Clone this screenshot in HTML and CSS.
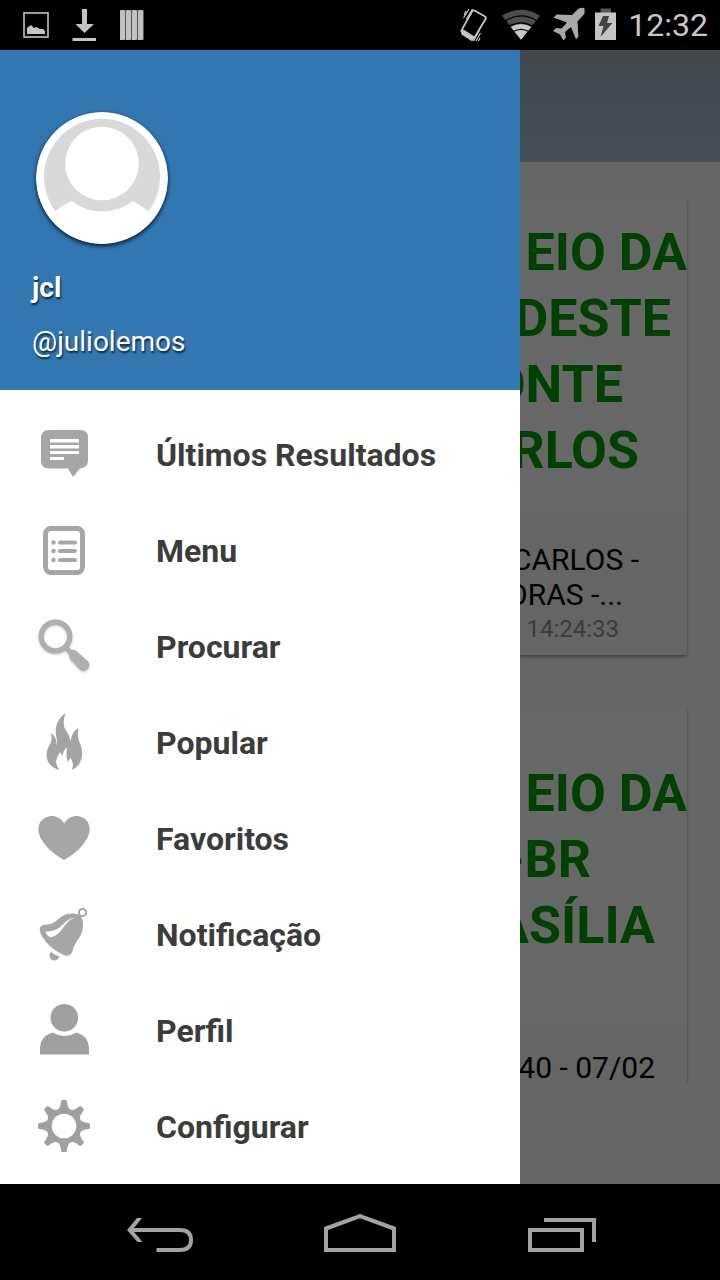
FILE: index.html
```html
<!DOCTYPE html>
<html lang="pt-BR">
<head>
<meta charset="utf-8">
<meta name="viewport" content="width=device-width, initial-scale=1">
<title>Últimos Resultados</title>
<link rel="stylesheet" href="styles.css">
</head>
<body>
<div class="screen">
  <header class="status-bar">
    <div class="status-group">
      <svg class="status-icon status-icon-wide" viewBox="12 0 48 50" aria-hidden="true">
        <rect x="24" y="13" width="24" height="24" fill="none" stroke="#c4c4c4" stroke-width="1.6"/>
        <path d="M27 34v-6l4-3 3 3 2-1 4 2 3 0 2 2v3z" fill="#c4c4c4"/>
      </svg>
      <svg class="status-icon status-icon-wide" viewBox="60 0 48 50" aria-hidden="true">
        <path d="M82 9h5v15h7l-9.500 9-9-9H82zM72.500 38H96v3H72.500z" fill="#c4c4c4"/>
      </svg>
      <svg class="status-icon status-icon-wide" viewBox="108 0 48 50" aria-hidden="true">
        <path d="M120 10h24v30h-24z" fill="#555"/>
        <path d="M120 11l1-1h3l1 1v28l-1 1h-4zM126 11l1-1h3l1 1v28l-1 1h-4zM132 11l1-1h3l1 1v28l-1 1h-4zM138 11l1-1h3l1 1v28l-1 1h-4z" fill="#c0c0c0"/>
      </svg>
    </div>
    <div class="status-group status-group-end">
      <svg class="status-icon status-icon-mid" viewBox="454 0 42 50" aria-hidden="true">
        <path d="M475 10.500l10.500 6q1.500 1 .6 2.500L475 37.500q-1 1.500-2.500.6l-9.500-6q-1.500-1-.6-2.500L472.500 11.500q1-1.600 2.500-1z" fill="none" stroke="#c4c4c4" stroke-width="1.800"/>
        <path d="M461 30.500l3-1 11 7-1 4-2 .5-10-6.500z" fill="#c4c4c4"/>
        <path d="M473 9l-6 10M469.500 9l-5.500 9M466.500 11l-2 4M480 30l-6 11M481 33l-4.500 8M480.500 38l-1.500 3" fill="none" stroke="#c4c4c4" stroke-width="1.200"/>
      </svg>
      <svg class="status-icon status-icon-mid" viewBox="500 0 44 50" aria-hidden="true">
        <path d="M502 15.500q19-12 39 0L521.500 40z" fill="#4d4d4d"/>
        <path d="M511 27q10.500-6 21 0L521.500 40z" fill="#c8c8c8"/>
        <path d="M505 21q16.500-10.500 33 0M509 26.500q12.500-7.500 25 0M513 32q8.500-5 17 0" fill="none" stroke="#000" stroke-width="1.200"/>
      </svg>
      <svg class="status-icon status-icon-mid" viewBox="548 0 42 50" aria-hidden="true">
        <path d="M585 9.500q1 3-1.500 6L578 21.500l1 15-2.500 3-5-12.500-6 5 1 5.500-2.500 3-3.500-6-7-3.500 3-3 5.500.5 5.500-6-13.500-5 3-3 15.500.5 6-6q3-2 6.500-1z" fill="#a8a8a8"/>
      </svg>
      <svg class="status-icon status-icon-small" viewBox="594 0 24 50" aria-hidden="true">
        <path d="M600.500 8.500h10.500V13h-10.500z" fill="#555"/>
        <path d="M595 12.500h21V40h-21z" fill="#c4c4c4"/>
        <path d="M603 16h6l-2 7h5.500l-12 14 3-11h-5z" fill="#444"/>
      </svg>
      <time class="clock">12:32</time>
    </div>
  </header>

  <main class="stage">
    <aside class="drawer">
      <section class="profile">
        <svg class="avatar" viewBox="0 0 132 132" role="img" aria-label="jcl">
          <circle cx="66" cy="66" r="66" fill="#fff"/>
          <path d="M19.500 99.500A58 58 0 1 1 112.500 99.500Q104 93 97 89Q83 99.500 66 99.500T36 89Q27 92 19.500 99.500z" fill="#d9d9d9"/>
          <circle cx="66" cy="51.500" r="36.800" fill="#fff"/>
        </svg>
        <strong class="profile-name">jcl</strong>
        <span class="profile-handle">@juliolemos</span>
      </section>
      <nav class="menu">
        <a class="menu-item" href="#resultados">
          <svg class="menu-icon" viewBox="0 0 64 64" aria-hidden="true">
            <path d="M17 8h31q8 0 8 8v22q0 8-8 8.500l-7 8.500-5-8.500H17q-8 0-8-8V16q0-8 8-8z" fill="#a6a6a6"/>
            <path d="M18 17h29v3.500H18zM18 23h29v3.500H18zM18 29h29v3H18zM18 35h14v3H18z" fill="#fff"/>
          </svg>
          <span class="menu-label">Últimos Resultados</span>
        </a>
        <a class="menu-item" href="#menu">
          <svg class="menu-icon" viewBox="0 0 64 64" aria-hidden="true">
            <rect x="13.500" y="10.500" width="37" height="44" rx="5.500" fill="none" stroke="#a6a6a6" stroke-width="5"/>
            <path d="M28 24.500h15M28 33h15M28 42h15" stroke="#a6a6a6" stroke-width="4.200" stroke-linecap="round"/>
            <g fill="#a6a6a6"><circle cx="21.500" cy="24.500" r="2.200"/><circle cx="21.500" cy="33" r="2.200"/><circle cx="21.500" cy="42" r="2.200"/></g>
          </svg>
          <span class="menu-label">Menu</span>
        </a>
        <a class="menu-item" href="#procurar">
          <svg class="menu-icon menu-icon-raised" viewBox="0 0 64 64" aria-hidden="true">
            <circle cx="23.500" cy="22.500" r="14.300" fill="none" stroke="#afafaf" stroke-width="5.200"/>
            <path d="M32 35l3.500-3.500 3.500 4q4 0 6 2l11 10q3 4-.5 7.500t-7.500.5L39 46q-2-2-2-6z" fill="#afafaf"/>
          </svg>
          <span class="menu-label">Procurar</span>
        </a>
        <a class="menu-item" href="#popular">
          <svg class="menu-icon" viewBox="0 0 64 64" aria-hidden="true">
            <path d="M33.500 3C31 11 31 16 34.500 21.500Q38 26 38.500 31.500C40 25 41.500 20.500 46.700 18.300C45 24 46 29 48 33.500C52 43 51 55 39.500 60C42 56 41 52 38.500 47.500Q36.500 50 36.200 52.500C34 49 34.500 43 35 37.500Q31.500 40 30.500 45.500Q28.500 43.500 28 42Q24.500 48 24 52Q24.500 56.500 27.500 60C18 58 14 50.500 14.700 43C15.300 35.500 22 32 18.700 23.300C24 26 24.500 31 24.800 36Q25.500 31 24 25.500C22.500 13 28 7.500 33.500 3z" fill="#a3a3a3"/>
          </svg>
          <span class="menu-label">Popular</span>
        </a>
        <a class="menu-item" href="#favoritos">
          <svg class="menu-icon" viewBox="0 0 64 64" aria-hidden="true">
            <path d="M32.200 17.500C38 7.500 51 8 56 16.500c4.500 8.500-1 18-7.500 25-5.500 6-13 10.500-16.300 12.500-4-2-11-6.500-16.700-12.500C9 34.500 3.500 25 8 16.500 13.500 8 26.500 7.500 32.200 17.500z" fill="#a6a6a6"/>
          </svg>
          <span class="menu-label">Favoritos</span>
        </a>
        <a class="menu-item" href="#notificacao">
          <svg class="menu-icon" viewBox="0 0 64 64" aria-hidden="true">
            <circle cx="50.500" cy="10.500" r="3.600" fill="none" stroke="#a6a6a6" stroke-width="2"/>
            <path d="M47 12.500q4.500 4 4 12-.5 8-6.500 15-3 5-4.500 11-3 5-8.500 2.500Q17 46 10 34.500q-3-6-2-9 1-3 8-3 6-1 11.500-6.500 8.500-6.500 19.500-3.500z" fill="#a6a6a6"/>
            <path d="M13.500 29.500q10 .5 17-6.500 6-7 12.500-7.500-6 2-11 9-7 10-13 11-4-1-5.500-6z" fill="#fff"/>
            <path d="M19 50q4 3 8.500 4.500-1.500 4-5 4-5-.5-5-5.500 0-2 1.500-3z" fill="#a6a6a6"/>
          </svg>
          <span class="menu-label">Notificação</span>
        </a>
        <a class="menu-item" href="#perfil">
          <svg class="menu-icon" viewBox="0 0 64 64" aria-hidden="true">
            <circle cx="32.300" cy="19.800" r="13.800" fill="#a0a0a0"/>
            <path d="M8 56.500V49q1-11 12.500-14.500 12 7 24 0Q56 38 57 49v7.500z" fill="#a0a0a0"/>
          </svg>
          <span class="menu-label">Perfil</span>
        </a>
        <a class="menu-item" href="#configurar">
          <svg class="menu-icon" viewBox="-32 -32 64 64" aria-hidden="true">
            <defs><path id="tooth" d="M-7-15.500Q-3.500-18-3-24.500q0-1.500 1.500-1.500h3Q3-26 3-24.500q.5 6.500 4 9z"/></defs>
            <circle r="15" fill="none" stroke="#a0a0a0" stroke-width="5.400"/>
            <g fill="#a0a0a0">
              <use href="#tooth"/><use href="#tooth" transform="rotate(45)"/><use href="#tooth" transform="rotate(90)"/><use href="#tooth" transform="rotate(135)"/>
              <use href="#tooth" transform="rotate(180)"/><use href="#tooth" transform="rotate(225)"/><use href="#tooth" transform="rotate(270)"/><use href="#tooth" transform="rotate(315)"/>
            </g>
          </svg>
          <span class="menu-label">Configurar</span>
        </a>
      </nav>
    </aside>

    <section class="content">
      <div class="app-bar"></div>
      <div class="feed">
        <article class="card">
          <div class="poster">
            <span class="poster-line">EIO DA</span>
            <span class="poster-line inset-s">DESTE</span>
            <span class="poster-line inset-l">ONTE</span>
            <span class="poster-line inset-m">RLOS</span>
          </div>
          <div class="caption">
            <span class="caption-line inset-m">CARLOS -</span>
            <span class="caption-line inset-l">ORAS -...</span>
            <time class="caption-time">7 14:24:33</time>
          </div>
        </article>
        <article class="card">
          <div class="poster poster-centered">
            <span class="poster-line">EIO DA</span>
            <span class="poster-line inset-xl">-BR</span>
            <span class="poster-line inset-r">ASÍLIA</span>
          </div>
          <div class="caption">
            <span class="caption-line inset-r">40 - 07/02</span>
          </div>
        </article>
      </div>
    </section>
  </main>

  <footer class="nav-bar">
    <button class="nav-button" type="button" aria-label="Voltar">
      <svg class="nav-icon" viewBox="120 1192 80 80" aria-hidden="true">
        <path d="M130 1230h50q11 0 11 10t-11 10h-23.500" fill="none" stroke="#a3a3a3" stroke-width="4"/>
        <path d="M137 1218h5l-9.500 12 10 12h-5L127 1230z" fill="#a3a3a3"/>
      </svg>
    </button>
    <button class="nav-button" type="button" aria-label="Início">
      <svg class="nav-icon" viewBox="320 1192 80 80" aria-hidden="true">
        <path d="M326 1250v-21.500l34-12.300 34 12.300V1250z" fill="none" stroke="#a3a3a3" stroke-width="4"/>
      </svg>
    </button>
    <button class="nav-button" type="button" aria-label="Recentes">
      <svg class="nav-icon" viewBox="520 1192 80 80" aria-hidden="true">
        <path d="M530 1230h52v20h-52zM544 1220h50v22" fill="none" stroke="#a3a3a3" stroke-width="4"/>
      </svg>
    </button>
  </footer>
</div>
</body>
</html>
```

FILE: styles.css
```css
* {
  box-sizing: border-box;
}

body {
  margin: 0;
  background: #000;
  font-family: Roboto, "Noto Sans", sans-serif;
}

.screen {
  display: flex;
  flex-direction: column;
  min-height: 100vh;
}

/* System status bar */
.status-bar {
  display: flex;
  justify-content: space-between;
  padding: 0 12px;
  background: #000;
}

.status-group {
  display: flex;
  align-items: center;
}

.status-group-end {
  gap: 4px;
}

.status-icon {
  display: block;
  height: 50px;
}

.status-icon-wide {
  width: 48px;
}

.status-icon-mid {
  width: 43px;
}

.status-icon-small {
  width: 24px;
}

.clock {
  margin-left: 6px;
  color: #c8c8c8;
  font-size: 32px;
  line-height: 50px;
}

/* Drawer */
.stage {
  display: flex;
  flex: 1;
  background: #666;
}

.drawer {
  flex: 0 0 520px;
  background: #fff;
}

.profile {
  display: flex;
  flex-direction: column;
  align-items: flex-start;
  gap: 22px;
  padding: 58px 32px 32px;
  background: #3277b2;
  color: #fff;
  font-size: 28px;
  line-height: 32px;
  text-shadow: 1px 2px 2px rgba(0, 0, 0, 0.7);
}

.avatar {
  width: 132px;
  height: 132px;
  margin: 4px 4px 6px;
  border-radius: 50%;
  box-shadow: 0 2px 4px rgba(0, 0, 0, 0.8);
}

.menu {
  padding: 16px 0 8px;
}

.menu-item {
  display: flex;
  align-items: center;
  gap: 60px;
  height: 96px;
  padding: 0 32px;
  color: #3c3c3c;
  font-size: 32px;
  font-weight: 700;
  line-height: 40px;
  text-decoration: none;
}

.menu-label {
  padding-top: 2px;
}

.menu-icon {
  flex: none;
  width: 64px;
  height: 64px;
}

.menu-icon-raised {
  filter: drop-shadow(0 1px 1px rgba(0, 0, 0, 0.25));
}

/* Dimmed feed beside the drawer */
.content {
  flex: 1;
  min-width: 0;
  overflow: hidden;
}

.app-bar {
  height: 112px;
  background: linear-gradient(#42474e, #464d56);
}

.feed {
  display: flex;
  flex-direction: column;
  gap: 51px;
  height: 921px;
  padding: 36px 33px 0 0;
  overflow: hidden;
}

.card {
  flex: none;
  background: #676767;
  border-radius: 0 4px 4px 0;
  box-shadow: 0 2px 3px rgba(0, 0, 0, 0.35);
}

.poster {
  display: flex;
  flex-direction: column;
  height: 320px;
  padding-top: 22px;
  color: #004000;
  font-size: 52px;
  font-weight: 700;
  line-height: 66px;
}

.poster-centered {
  padding-top: 55px;
}

.poster-line,
.caption-line,
.caption-time {
  display: flex;
  justify-content: flex-end;
  overflow: hidden;
  white-space: nowrap;
}

.caption {
  padding: 24px 0 8px;
  background: #656565;
  color: #000;
  font-size: 30px;
  line-height: 35px;
}

.caption-time {
  padding-right: 68px;
  color: #3b3b3b;
  font-size: 24px;
}

.inset-s {
  padding-right: 16px;
}

.inset-r {
  padding-right: 32px;
}

.inset-m {
  padding-right: 48px;
}

.inset-l {
  padding-right: 64px;
}

.inset-xl {
  padding-right: 96px;
}

/* System navigation bar */
.nav-bar {
  display: flex;
  justify-content: center;
  background: #000;
}

.nav-button {
  display: flex;
  align-items: center;
  justify-content: center;
  width: 200px;
  height: 96px;
  padding: 0;
  border: 0;
  background: none;
}

.nav-icon {
  width: 80px;
  height: 80px;
}
```
